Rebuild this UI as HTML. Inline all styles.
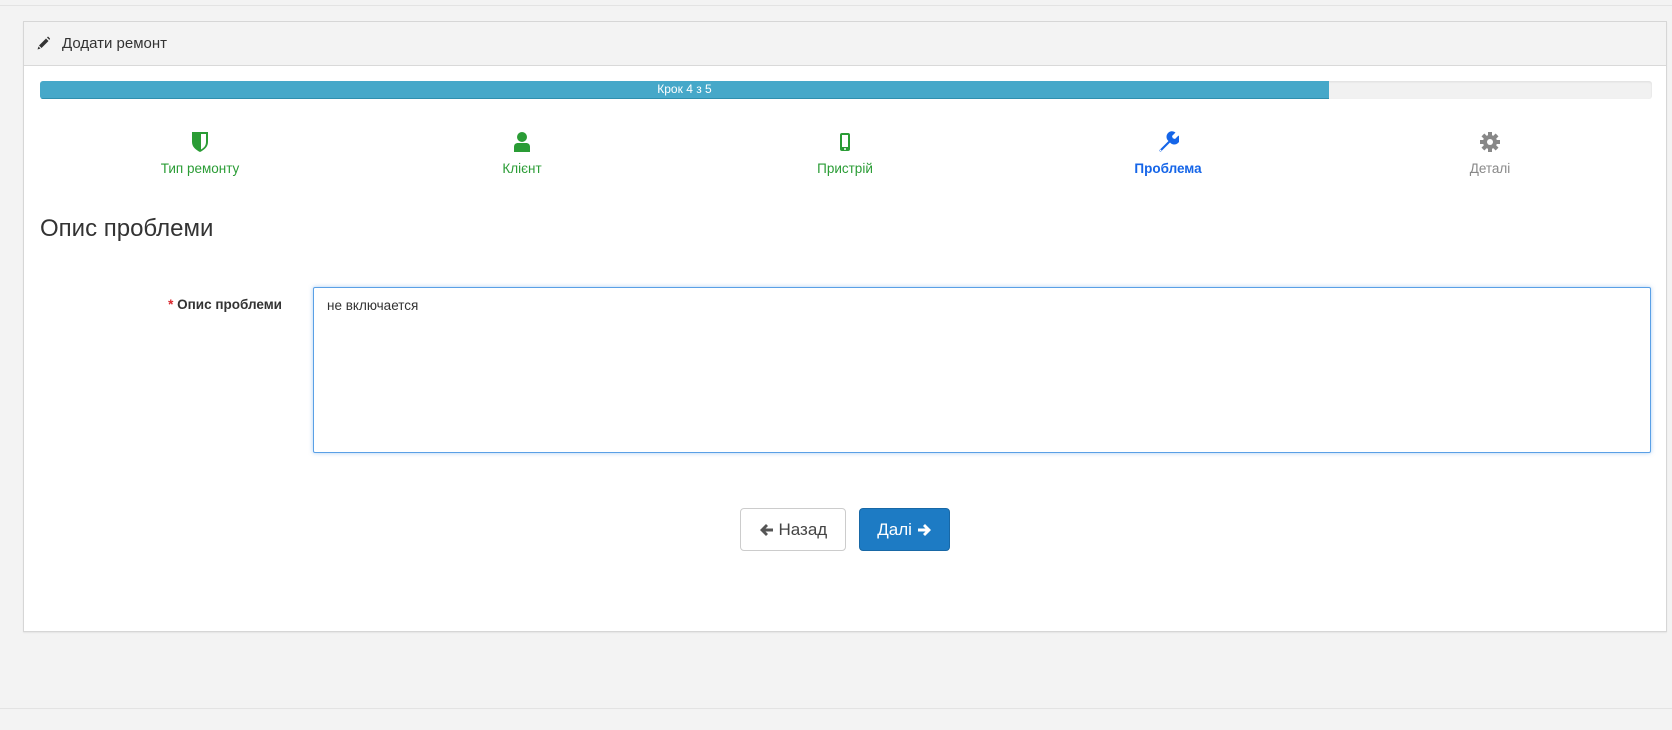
<!DOCTYPE html>
<html><head><meta charset="utf-8"><style>
*{box-sizing:border-box;margin:0;padding:0}
body{width:1672px;height:730px;background:#f3f3f3;font-family:"Liberation Sans",sans-serif;color:#333;position:relative;overflow:hidden}
.topline{position:absolute;left:0;top:5px;width:1672px;height:1px;background:#e3e3e3}
.botline{position:absolute;left:0;top:708px;width:1672px;height:1px;background:#e3e3e3}
.panel{position:absolute;left:23px;top:21px;width:1644px;height:611px;background:#fff;border:1px solid #d6d6d6;box-shadow:0 1px 1px rgba(0,0,0,.06)}
.head{height:44px;background:#f3f3f3;border-bottom:1px solid #d9d9d9;position:relative}
.head span{position:absolute;left:38px;top:13px;font-size:15px;color:#333}
.pencil{position:absolute;left:13px;top:14px}
.bar{position:absolute;left:16px;top:59px;width:1612px;height:18px;background:#f1f1f1;border-radius:3px;overflow:hidden;box-shadow:inset 0 1px 2px rgba(0,0,0,.08)}
.fill{width:1289px;height:18px;background:#46a8c9;border-bottom:1px solid #2f8fae;color:#fff;font-size:12px;text-align:center;line-height:17px}
.step{position:absolute;top:109px;width:200px;margin-left:-100px;text-align:center;font-size:13.5px}
.step svg{display:block;margin:0 auto 8px}
h3{position:absolute;left:16px;top:193px;font-weight:normal;font-size:24px;color:#333}
.lbl{position:absolute;right:1384px;top:275px;font-size:13.5px;font-weight:bold;color:#333}
.lbl b{color:#d9262c}
.ta{position:absolute;left:289px;top:265px;width:1338px;height:166px;border:1px solid #5aa0e6;border-radius:2px;box-shadow:0 0 4px rgba(90,160,230,.5);font-size:13.5px;padding:10px 13px;color:#333}
.btn{position:absolute;top:486px;height:43px;border-radius:4px;font-size:17px;line-height:41px;text-align:center}
.btn svg{vertical-align:-2px}
.back{left:716px;width:106px;border:1px solid #ccc;background:#fff;color:#444}
.next{left:835px;width:91px;background:#1d7bc4;border:1px solid #1868a6;color:#fff}
</style></head><body>
<div class="topline"></div>
<div class="panel">
 <div class="head"><svg class="pencil" width="13" height="14" viewBox="0 0 13 14"><path d="M2 9.5 L9 2.5 L11.5 5 L4.5 12 Z M1.5 10.5 L3.5 12.5 L0.5 13.5 Z M10 1.5 L11 0.5 L13 2.5 L12.5 4 Z" fill="#333"/></svg><span>Додати ремонт</span></div>
 <div class="bar"><div class="fill">Крок 4 з 5</div></div>
 <div class="step" style="left:176px;color:#2a9c35"><svg width="20" height="22" viewBox="0 0 20 22"><path d="M2 1H18V11C18 16 14 19 10 21C6 19 2 16 2 11Z" fill="#2a9c35"/><path d="M11 3H16V11C16 15 13.5 17 11 18.5Z" fill="#fff"/></svg>Тип ремонту</div>
 <div class="step" style="left:498px;color:#2a9c35"><svg width="20" height="22" viewBox="0 0 20 22"><circle cx="10" cy="6" r="5" fill="#2a9c35"/><path d="M2 21V16C2 13 4 12 6 12H14C16 12 18 13 18 16V21Z" fill="#2a9c35"/></svg>Клієнт</div>
 <div class="step" style="left:821px;color:#2a9c35"><svg width="20" height="22" viewBox="0 0 20 22"><rect x="5" y="2" width="10" height="18" rx="2" fill="#2a9c35"/><rect x="7" y="4" width="6" height="12" fill="#fff"/><circle cx="10" cy="18" r="1" fill="#fff"/></svg>Пристрій</div>
 <div class="step" style="left:1144px;color:#1565e8;font-weight:bold"><svg width="22" height="22" viewBox="0 0 22 22"><path d="M2 19.5L11.5 10A5.5 5.5 0 0 1 18.5 1.5L15 5L15.8 7.2L18 8L21.5 4.5A5.5 5.5 0 0 1 13 11.5L3.5 21Z" fill="#1565e8"/><circle cx="3.5" cy="19.5" r="0.9" fill="#fff"/></svg>Проблема</div>
 <div class="step" style="left:1466px;color:#888"><svg width="22" height="22" viewBox="0 0 22 22"><g fill="#888"><circle cx="11" cy="11" r="7"/><rect x="9" y="1" width="4" height="20"/><rect x="1" y="9" width="20" height="4"/><rect x="9" y="1" width="4" height="20" transform="rotate(45 11 11)"/><rect x="9" y="1" width="4" height="20" transform="rotate(-45 11 11)"/></g><circle cx="11" cy="11" r="3" fill="#fff"/></svg>Деталі</div>
 <h3>Опис проблеми</h3>
 <div class="lbl"><b>*</b> Опис проблеми</div>
 <div class="ta">не включается</div>
 <div class="btn back"><svg width="15" height="14" viewBox="0 0 15 14"><path d="M7 1L1 7L7 13L9 11L6.5 8.5H14V5.5H6.5L9 3Z" fill="#555"/></svg> Назад</div>
 <div class="btn next">Далі <svg width="15" height="14" viewBox="0 0 15 14"><path d="M8 1L14 7L8 13L6 11L8.5 8.5H1V5.5H8.5L6 3Z" fill="#fff"/></svg></div>
</div>
<div class="botline"></div>
</body></html>
